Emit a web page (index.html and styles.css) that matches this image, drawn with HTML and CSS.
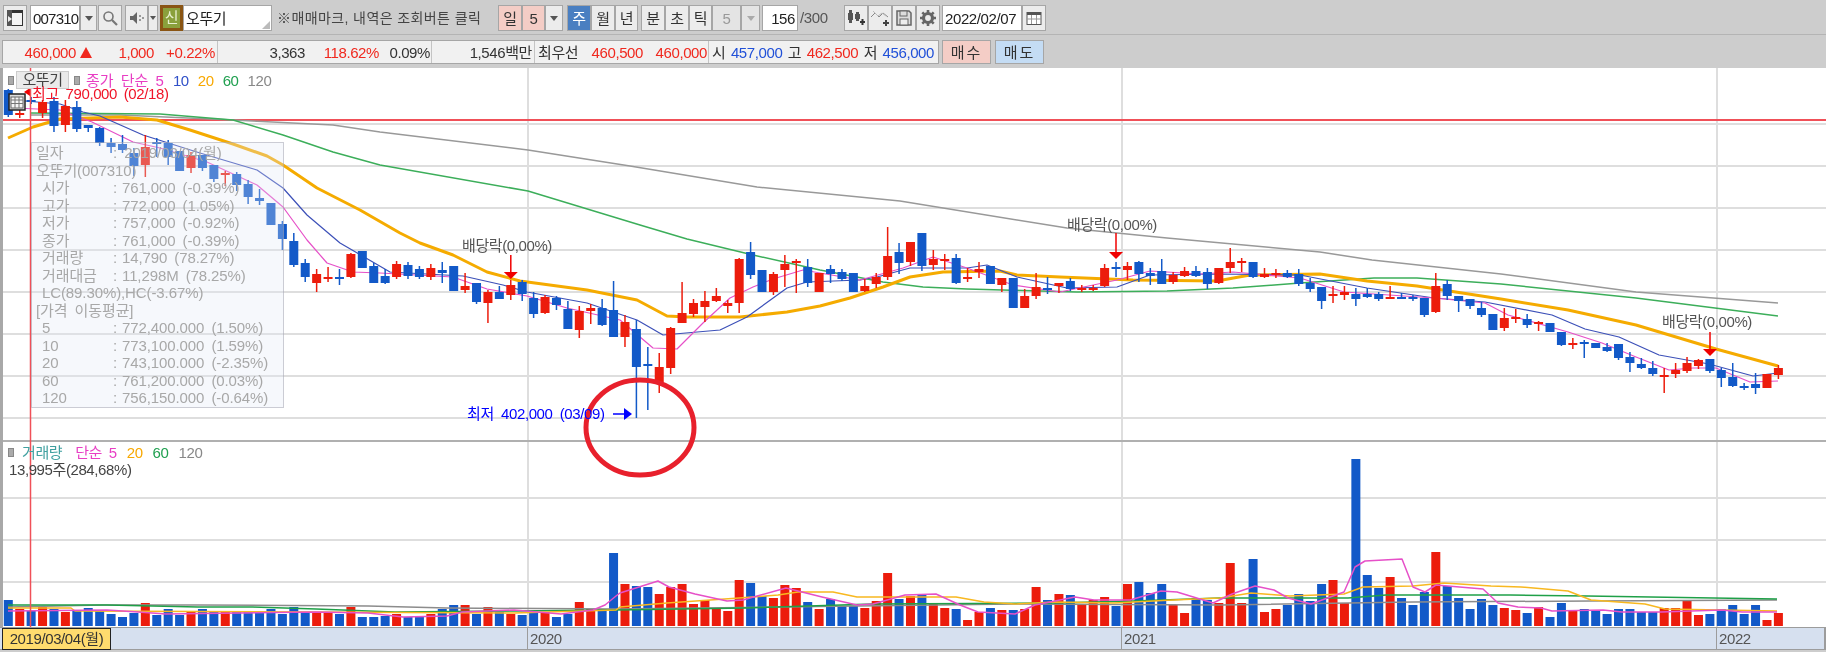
FILE: index.html
```html
<!DOCTYPE html>
<html lang="ko">
<head>
  <meta charset="UTF-8" />
  <title>오뚜기 차트</title>
  <link rel="stylesheet" href="styles.css">
</head>
<body>
  <div class="page">
    <div class="toolbar">
      <button class="tb w24 ml3">
        <svg width="18" height="18" viewBox="0 0 18 18"><rect x="1.5" y="1.5" width="15" height="15" fill="#f4f4f4" stroke="#333"/><rect x="1" y="1" width="16" height="3" fill="#333"/><rect x="1" y="1" width="5" height="16" fill="#555"/><path d="M2 7l4 3-4 3z" fill="#eee"/></svg>
      </button>
      <div class="field w50 ml3 code">007310</div>
      <button class="tb w17 arrow"></button>
      <button class="tb w24 ml1">
        <svg width="16" height="16" viewBox="0 0 16 16"><circle cx="6.5" cy="6.5" r="4.5" fill="none" stroke="#777" stroke-width="1.6"/><path d="M10 10l5 5" stroke="#777" stroke-width="2.2"/></svg>
      </button>
      <button class="tb w23 ml3">
        <svg width="16" height="16" viewBox="0 0 16 16"><path d="M1 6h3l4-4v12l-4-4H1z" fill="#666"/><path d="M10 5h2v2h-2zM10 9h2v2h-2zM13 7h2v2h-2z" fill="#999"/></svg>
      </button>
      <button class="tb w10 arrow"></button>
      <div class="new-badge ml2">신</div>
      <div class="field name">오뚜기</div>
      <div class="hint">※매매마크, 내역은 조회버튼 클릭</div>

      <button class="tb w24 pink group-a">일</button>
      <button class="tb w23 pink">5</button>
      <button class="tb w18 arrow"></button>
      <button class="tb w24 on ml4">주</button>
      <button class="tb w24">월</button>
      <button class="tb w23">년</button>
      <button class="tb w24 ml3">분</button>
      <button class="tb w24">초</button>
      <button class="tb w23">틱</button>
      <button class="tb w29 off">5</button>
      <button class="tb w19 arrow off-arrow"></button>
      <div class="field w36 count ml2">156</div>
      <div class="total">/300</div>

      <button class="tb w24 group-b">
        <svg width="20" height="18" viewBox="0 0 20 18"><path d="M3 1h3v3h1v7H6v3H3v-3H2V4h1zM10 3h3v2h1v5h-1v2h-3v-2H9V5h1z" fill="#555"/><path d="M14 12h5v2h-5zM15.500 10h2v6h-2z" fill="#333"/></svg>
      </button>
      <button class="tb w24">
        <svg width="20" height="18" viewBox="0 0 20 18"><path d="M1 8l4-4 4 4 4-4 5 4" fill="none" stroke="#888"/><path d="M3 2l5 5 4-3 4 3" fill="none" stroke="#bbb"/><path d="M13 13h6v2h-6zM15 11h2v6h-2z" fill="#444"/></svg>
      </button>
      <button class="tb w24">
        <svg width="18" height="18" viewBox="0 0 18 18"><path d="M2 2h12l2 2v12H2z" fill="#ddd" stroke="#666" stroke-width="1.500"/><rect x="5" y="2" width="7" height="5" fill="#ddd" stroke="#666"/><rect x="5" y="10" width="8" height="6" fill="#eee" stroke="#666"/></svg>
      </button>
      <button class="tb w24">
        <svg width="18" height="18" viewBox="0 0 18 18"><circle cx="9" cy="9" r="4.500" fill="none" stroke="#666" stroke-width="3.200"/><path d="M9 1v4M9 13v4M1 9h4M13 9h4M3.300 3.300l3 3M11.700 11.700l3 3M14.700 3.300l-3 3M6.300 11.700l-3 3" stroke="#666" stroke-width="2.600"/></svg>
      </button>
      <div class="field w80 ml2">2022/02/07</div>
      <button class="tb w24">
        <svg width="16" height="15" viewBox="0 0 16 15"><rect x="1" y="1.500" width="14" height="12" fill="#fff" stroke="#555"/><rect x="1" y="1" width="14" height="3" fill="#555"/><path d="M1 8h14M5.500 4v9M10.500 4v9" stroke="#999"/></svg>
      </button>
    </div>

    <div class="quote">
      <div class="quote-box">
        <div class="cell cell-price">
          <span class="up">460,000</span><span class="tri"></span><span class="up">1,000</span><span class="up">+0.22%</span>
        </div>
        <div class="cell cell-vol">
          <span>3,363</span><span class="up">118.62%</span><span>0.09%</span>
        </div>
        <div class="cell cell-amount"><span>1,546백만</span></div>
        <div class="cell cell-best">
          <span class="left">최우선</span><span class="up">460,500</span><span class="up">460,000</span>
        </div>
        <div class="cell cell-ohl">
          <span>시</span><span class="down">457,000</span><span>고</span><span class="up">462,500</span><span>저</span><span class="down">456,000</span>
        </div>
      </div>
      <button class="order buy">매수</button>
      <button class="order sell">매도</button>
    </div>

    <div class="chart">
      <div id="plot"></div>

      <div class="legend legend-price">
        <i class="mark"></i>
        <span class="stock-name">오뚜기</span>
        <i class="mark"></i>
        <span class="c-pink first">종가 단순 5</span>
        <span class="c-blue">10</span>
        <span class="c-orange">20</span>
        <span class="c-green">60</span>
        <span class="c-gray">120</span>
      </div>
      <div class="high-label">최고 790,000 (02/18)</div>
      <div class="calc-icon">
        <svg width="18" height="18" viewBox="0 0 18 18"><rect x="1" y="1" width="16" height="16" fill="#ddd" stroke="#222" stroke-width="1.500"/><rect x="3" y="4" width="12" height="11" fill="#f6f6f6" stroke="#666"/><path d="M3 7h12M3 10.500h12M7 4v11M11 4v11" stroke="#777"/></svg>
      </div>

      <div class="info">
        <div class="info-head">일자</div>
        <div class="info-head">오뚜기(007310)</div>
        <div class="info-row"><span>시가</span><span>:</span><span>761,000 (-0.39%)</span></div>
        <div class="info-row"><span>고가</span><span>:</span><span>772,000 (1.05%)</span></div>
        <div class="info-row"><span>저가</span><span>:</span><span>757,000 (-0.92%)</span></div>
        <div class="info-row"><span>종가</span><span>:</span><span>761,000 (-0.39%)</span></div>
        <div class="info-row"><span>거래량</span><span>:</span><span>14,790 (78.27%)</span></div>
        <div class="info-row"><span>거래대금</span><span>:</span><span>11,298M (78.25%)</span></div>
        <div class="info-head indent">LC(89.30%),HC(-3.67%)</div>
        <div class="info-head">[가격 이동평균]</div>
        <div class="info-row"><span>5</span><span>:</span><span>772,400.000 (1.50%)</span></div>
        <div class="info-row"><span>10</span><span>:</span><span>773,100.000 (1.59%)</span></div>
        <div class="info-row"><span>20</span><span>:</span><span>743,100.000 (-2.35%)</span></div>
        <div class="info-row"><span>60</span><span>:</span><span>761,200.000 (0.03%)</span></div>
        <div class="info-row"><span>120</span><span>:</span><span>756,150.000 (-0.64%)</span></div>
        <div class="info-date">: 2019/03/04(월)</div>
      </div>

      <div class="low-label">최저 402,000 (03/09)</div>

      <div class="legend legend-volume">
        <i class="mark"></i>
        <span class="c-teal">거래량</span>
        <span class="c-pink ml3">단순 5</span>
        <span class="c-orange">20</span>
        <span class="c-green">60</span>
        <span class="c-gray">120</span>
      </div>
      <div class="volume-label">13,995주(284,68%)</div>
    </div>

    <div class="axis">
      <div class="axis-date">2019/03/04(월)</div>
      <div class="axis-year y2020">2020</div>
      <div class="axis-year y2021">2021</div>
      <div class="axis-year y2022">2022</div>
    </div>
  </div>
  <script src="chart.js"></script>
</body>
</html>
```

FILE: styles.css
```css
* {
  box-sizing: border-box;
}
html, body {
  margin: 0;
  padding: 0;
  width: 1826px;
  height: 652px;
  overflow: hidden;
  background-color: #cdcdcd;
}
.page {
  font-family: "Liberation Sans", "Noto Sans CJK KR", sans-serif;
  font-size: 15px;
  letter-spacing: -0.4px;
  line-height: 1;
  color: #333;
  filter: blur(0.35px);
}
button {
  font: inherit;
  letter-spacing: inherit;
  color: inherit;
  padding: 0;
}

/* top toolbar */
.toolbar {
  display: flex;
  height: 35px;
  padding-top: 5px;
  padding-bottom: 4px;
  border-bottom: 1px solid #b4b4b4;
}
.tb {
  display: flex;
  align-items: center;
  justify-content: center;
  height: 26px;
  background-color: #ececec;
  border: 1px solid #a6a6a6;
}
.arrow::after {
  content: "";
  border-left: 4px solid transparent;
  border-right: 4px solid transparent;
  border-top: 5px solid #555;
}
.w10 { width: 10px; }
.w10.arrow::after { border-left-width: 3px; border-right-width: 3px; border-top-width: 4px; }
.w17 { width: 17px; }
.w18 { width: 18px; }
.w19 { width: 19px; }
.w23 { width: 23px; }
.w24 { width: 24px; }
.w29 { width: 29px; }
.w36 { width: 36px; }
.w50 { width: 50px; }
.w80 { width: 80px; }
.ml1 { margin-left: 1px; }
.ml2 { margin-left: 2px; }
.ml3 { margin-left: 3px; }
.ml4 { margin-left: 4px; }
.field {
  display: flex;
  align-items: center;
  height: 26px;
  padding-left: 2px;
  background-color: #fff;
  border: 1px solid #a6a6a6;
  color: #222;
  white-space: nowrap;
  overflow: hidden;
}
.code { letter-spacing: -0.8px; }
.count {
  justify-content: flex-end;
  padding-right: 2px;
}
.new-badge {
  width: 23px;
  height: 26px;
  line-height: 19px;
  text-align: center;
  color: #e8f0d0;
  background-color: #8aa03c;
  border: 3px solid #8a5514;
}
.name {
  position: relative;
  width: 89px;
}
.name::after {
  content: "";
  position: absolute;
  right: 1px;
  bottom: 1px;
  border-left: 8px solid transparent;
  border-bottom: 8px solid #bbb;
}
.hint {
  width: 212px;
  margin-left: 5px;
  font-size: 14px;
  letter-spacing: 0.4px;
  line-height: 26px;
  white-space: nowrap;
  color: #444;
}
.group-a { margin-left: 9px; }
.group-b { margin-left: 14px; }
.pink { background-color: #f4cdc6; }
.on {
  background-color: #4a7fc1;
  color: #fff;
}
.off {
  color: #999;
  background-color: #e4e4e4;
}
.off-arrow { background-color: #e4e4e4; }
.off-arrow::after { border-top-color: #aaa; }
.total {
  width: 30px;
  margin-left: 2px;
  line-height: 26px;
  color: #555;
}

/* quote strip */
.quote {
  display: flex;
  height: 24px;
  margin-top: 5px;
  padding-left: 2px;
}
.quote-box {
  display: flex;
  width: 937px;
  background-color: #f1f1f1;
  border: 1px solid #a6a6a6;
}
.cell {
  display: grid;
  align-items: center;
  text-align: right;
  white-space: nowrap;
  border-right: 1px solid #c4c4c4;
}
.cell-price {
  width: 215px;
  grid-template-columns: 73px 19px 59px 61px;
}
.tri {
  justify-self: center;
  width: 0;
  border-left: 6.5px solid transparent;
  border-right: 6.5px solid transparent;
  border-bottom: 11px solid #f0281e;
}
.cell-vol {
  width: 214px;
  grid-template-columns: 87px 74px 51px;
}
.cell-amount {
  width: 103px;
  grid-template-columns: 100px;
}
.cell-best {
  width: 174px;
  grid-template-columns: 52px 56px 64px;
}
.left {
  text-align: left;
  padding-left: 3px;
}
.cell-ohl {
  width: 229px;
  display: flex;
  gap: 5.5px;
  padding-left: 3px;
  border-right: 0;
}
.up { color: #f0281e; }
.down { color: #2050d8; }
.order {
  width: 49px;
  height: 24px;
  margin-left: 3px;
  border: 1px solid #a6a6a6;
  letter-spacing: 2px;
}
.buy { background-color: #f4cdc6; }
.sell {
  width: 49px;
  margin-left: 4px;
  background-color: #c4dcf4;
}

/* chart area */
.chart {
  position: relative;
  height: 559px;
  margin-top: 4px;
  background-color: #fff;
  overflow: hidden;
}
#plot svg {
  display: block;
}
.grid { stroke: #dedede; stroke-width: 2; }
.axis-line { stroke: #b0b0b0; stroke-width: 2; }
.frame { stroke: #a8a8a8; stroke-width: 3; }
.hairline { stroke: #f05058; stroke-width: 2; }
.crosshair { stroke: #f05058; stroke-width: 1.500; }
.ma { fill: none; stroke-linejoin: round; }
.ma-120 { stroke: #999; stroke-width: 1.500; }
.ma-60 { stroke: #3cae5a; stroke-width: 1.500; }
.ma-20 { stroke: #f5ab00; stroke-width: 3; }
.ma-10 { stroke: #3c50b8; stroke-width: 1.200; }
.ma-5 { stroke: #e650c8; stroke-width: 1.200; }
.vma-20 { stroke: #f8b820; stroke-width: 1.500; }
.vma-60 { stroke: #1fa048; stroke-width: 1.500; }
.vma-120 { stroke: #8c8c8c; stroke-width: 1.500; }
.vma-5 { stroke: #e650c8; stroke-width: 1.500; }
.red { fill: #ec1c0c; }
.blue { fill: #1259c8; }
.wick-red { stroke: #ec1c0c; stroke-width: 1.500; }
.wick-blue { stroke: #1259c8; stroke-width: 1.500; }
.marker { stroke: #f00000; stroke-width: 1.500; }
.marker-head { fill: #f00000; }
.marker-text {
  font-size: 15px;
  word-spacing: 1px;
  fill: #555;
}
.low-arrow { stroke: #0000ff; stroke-width: 1.500; }
.low-head { fill: #0000ff; }
.circle {
  fill: none;
  stroke: #e8202c;
  stroke-width: 5;
}

.legend {
  position: absolute;
  display: flex;
  align-items: center;
  gap: 9px;
  white-space: nowrap;
}
.legend-price {
  top: 3px;
  left: 8px;
  height: 18px;
}
.legend-volume {
  top: 375px;
  left: 8px;
  height: 18px;
  gap: 10px;
  word-spacing: 3px;
}
.legend-volume .mark { margin-right: -2px; }
.mark {
  display: block;
  width: 6px;
  height: 9px;
  background-color: #aaa;
  border: 1px solid #888;
}
.stock-name {
  width: 53px;
  height: 18px;
  margin-left: -7px;
  margin-right: -4px;
  line-height: 16px;
  text-align: center;
  color: #444;
  background-color: #eaeaea;
  border: 1px solid #ccc;
}
.first {
  margin-left: -3px;
  letter-spacing: 0;
  word-spacing: 3px;
}
.c-pink { color: #e83ec4; }
.c-blue { color: #3050c8; }
.c-orange { color: #f8a800; }
.c-green { color: #20a050; }
.c-gray { color: #888; }
.c-teal { color: #40a0a0; }
.high-label {
  position: absolute;
  top: 18px;
  left: 32px;
  color: #f01428;
  word-spacing: 3px;
  white-space: nowrap;
}
.calc-icon {
  position: absolute;
  top: 25px;
  left: 8px;
  width: 18px;
  height: 18px;
}
.info {
  position: absolute;
  top: 74px;
  left: 31px;
  width: 253px;
  height: 266px;
  padding: 1px 0 0 4px;
  letter-spacing: -0.1px;
  word-spacing: 3px;
  color: #a8a8a8;
  background-color: rgba(226, 232, 246, 0.3);
  border: 1px solid rgba(150, 150, 165, 0.45);
}
.info-head,
.info-row {
  height: 17.5px;
  line-height: 17.5px;
  white-space: nowrap;
}
.info-row {
  display: grid;
  grid-template-columns: 71px 9px 1fr;
  padding-left: 6px;
}
.indent { padding-left: 6px; }
.info-date {
  position: absolute;
  top: 1px;
  left: 81px;
  line-height: 17.5px;
  white-space: nowrap;
}
.low-label {
  position: absolute;
  top: 338px;
  left: 467px;
  color: #0000ff;
  word-spacing: 3.500px;
  white-space: nowrap;
}
.volume-label {
  position: absolute;
  top: 394px;
  left: 9px;
  color: #444;
  white-space: nowrap;
}

/* date axis */
.axis {
  position: relative;
  height: 23px;
  background-color: #d6e0ef;
  border-top: 1px solid #9c9c9c;
  border-bottom: 1px solid #9c9c9c;
  border-right: 2px solid #9c9c9c;
}
.axis-date {
  position: absolute;
  left: 2px;
  top: 0;
  width: 109px;
  height: 22px;
  line-height: 20px;
  text-align: center;
  background-color: #ffdc6e;
  border: 1px solid #222;
}
.axis-year {
  position: absolute;
  top: 0;
  height: 22px;
  padding-left: 2px;
  line-height: 22px;
  color: #555;
  border-left: 1px solid #9c9c9c;
}
.y2020 { left: 527px; }
.y2021 { left: 1121px; }
.y2022 { left: 1716px; }
```

FILE: chart.js
```js
const W = 1826, TOP = 68, BOTTOM = 627;
const xOf = (i) => 8.3 + 11.42 * i;

// top of body, bottom of body, high, low (all screen y), r = red, b = blue
const candles = [
  [90,115,89,117,"b"],[113,115,105,118,"r"],[100,102,97,104,"b"],[102,113,100,118,"r"],[101,126,97,132,"b"],
  [106,125,100,132,"r"],[107,129,101,132,"b"],[125,128,125,132,"b"],[128,143,127,146,"b"],[143,147,138,153,"b"],
  [144,150,135,153,"b"],[153,166,148,176,"b"],[147,165,135,177,"r"],[142,144,138,157,"b"],[143,157,140,165,"b"],
  [151,171,151,171,"b"],[155,168,152,173,"r"],[155,168,155,171,"b"],[165,179,165,182,"b"],[173,174,171,186,"r"],
  [174,185,172,191,"b"],[184,197,180,204,"b"],[198,201,189,205,"b"],[203,225,203,225,"b"],[224,239,221,250,"b"],
  [241,265,233,267,"b"],[263,277,259,282,"b"],[274,283,269,292,"r"],[277,279,267,282,"r"],[277,279,269,285,"b"],
  [254,277,253,278,"r"],[251,268,251,268,"b"],[266,283,263,283,"b"],[276,283,269,284,"b"],[264,277,261,279,"r"],
  [265,276,262,279,"b"],[269,277,266,279,"b"],[268,277,264,280,"r"],[270,273,262,283,"b"],[266,291,266,291,"b"],
  [286,290,273,293,"r"],[283,302,283,304,"b"],[292,303,290,323,"r"],[292,299,286,299,"b"],[285,295,280,300,"r"],
  [282,294,280,301,"b"],[298,314,292,318,"b"],[297,313,295,314,"r"],[298,305,296,310,"b"],[309,329,301,329,"b"],
  [311,330,306,338,"r"],[308,311,304,324,"r"],[308,325,299,326,"b"],[310,337,281,337,"b"],[322,337,315,347,"r"],
  [329,367,320,418,"b"],[364,366,347,410,"b"],[367,382,353,393,"r"],[328,368,327,374,"r"],[313,323,282,323,"r"],
  [303,314,299,317,"r"],[301,307,291,322,"r"],[296,301,288,302,"r"],[303,306,300,313,"r"],[259,303,258,313,"r"],
  [252,275,242,279,"b"],[270,292,270,292,"b"],[274,292,272,295,"r"],[264,270,255,287,"r"],[261,263,259,293,"r"],
  [267,283,259,287,"b"],[273,292,273,292,"r"],[269,274,265,283,"b"],[272,279,269,281,"b"],[273,292,273,292,"b"],
  [286,291,279,292,"r"],[277,284,273,288,"r"],[256,277,227,280,"r"],[252,263,243,274,"b"],[242,262,242,266,"r"],
  [233,266,233,271,"b"],[259,265,250,270,"r"],[259,261,254,270,"r"],[258,283,254,284,"b"],[277,279,268,282,"r"],
  [269,272,262,278,"r"],[266,284,266,284,"b"],[278,285,278,292,"r"],[278,308,278,308,"b"],[296,308,289,308,"r"],
  [287,296,273,299,"r"],[288,289,277,294,"b"],[283,286,283,293,"r"],[281,289,278,291,"b"],[288,289,285,292,"r"],
  [288,289,285,291,"r"],[268,286,264,287,"r"],[267,269,262,277,"b"],[266,270,262,280,"r"],[262,274,261,282,"b"],
  [273,276,268,285,"b"],[271,284,259,284,"b"],[275,282,272,284,"r"],[271,276,267,277,"r"],[271,276,266,277,"b"],
  [272,284,268,289,"b"],[268,283,268,284,"r"],[262,268,248,273,"r"],[261,262,258,272,"r"],[262,277,262,278,"b"],
  [274,277,268,278,"r"],[273,275,269,278,"r"],[273,277,270,278,"b"],[274,284,269,286,"b"],[283,289,278,292,"b"],
  [287,301,287,309,"b"],[294,296,286,303,"r"],[292,295,286,300,"r"],[294,299,288,306,"b"],[294,297,288,298,"b"],
  [294,299,292,301,"b"],[297,299,286,299,"r"],[297,299,293,299,"b"],[297,299,295,301,"b"],[298,315,298,317,"b"],
  [286,312,273,313,"r"],[284,296,280,300,"b"],[296,301,296,312,"b"],[299,306,299,309,"b"],[308,315,302,317,"b"],
  [314,330,314,330,"b"],[318,328,308,331,"r"],[317,318,309,323,"r"],[319,325,314,328,"b"],[322,323,321,331,"r"],
  [323,332,323,332,"b"],[332,345,332,346,"b"],[343,345,338,349,"r"],[342,343,340,358,"b"],[343,348,343,348,"b"],
  [347,351,343,352,"b"],[344,358,344,360,"b"],[357,363,352,372,"b"],[364,368,358,369,"b"],[368,374,361,376,"b"],
  [375,376,368,393,"r"],[370,374,363,378,"r"],[363,371,357,373,"r"],[360,366,359,369,"r"],[359,371,359,373,"b"],
  [370,378,368,387,"b"],[377,386,363,387,"b"],[386,388,383,390,"b"],[384,388,373,394,"b"],[374,388,374,388,"r"],
  [368,375,365,379,"r"]
];

// volume bars: top y, colour
const volume = [
  [600,"b"],[609,"r"],[611,"b"],[607,"r"],[609,"b"],[612,"r"],[610,"b"],[608,"b"],[611,"b"],[614,"b"],
  [617,"b"],[613,"b"],[603,"r"],[615,"b"],[609,"b"],[615,"b"],[612,"r"],[609,"b"],[612,"b"],[612,"r"],
  [612,"b"],[612,"b"],[612,"b"],[609,"b"],[614,"b"],[607,"b"],[612,"b"],[612,"r"],[612,"r"],[614,"b"],
  [607,"r"],[617,"b"],[617,"b"],[616,"b"],[614,"r"],[617,"b"],[617,"b"],[614,"r"],[609,"b"],[605,"b"],
  [605,"r"],[614,"b"],[607,"r"],[612,"b"],[614,"r"],[615,"b"],[612,"b"],[612,"r"],[617,"b"],[614,"b"],
  [602,"r"],[609,"r"],[609,"b"],[553,"b"],[584,"r"],[586,"b"],[587,"b"],[594,"r"],[587,"r"],[584,"r"],
  [604,"r"],[600,"r"],[608,"r"],[611,"r"],[580,"r"],[583,"b"],[596,"b"],[598,"r"],[585,"r"],[588,"r"],
  [602,"b"],[609,"r"],[599,"b"],[606,"b"],[606,"b"],[608,"r"],[601,"r"],[573,"r"],[599,"b"],[596,"r"],
  [595,"b"],[604,"r"],[608,"r"],[609,"b"],[620,"r"],[612,"r"],[608,"b"],[610,"r"],[610,"b"],[609,"r"],
  [587,"r"],[600,"b"],[594,"r"],[595,"b"],[604,"r"],[600,"r"],[597,"r"],[606,"b"],[584,"r"],[582,"b"],
  [593,"b"],[584,"b"],[605,"r"],[613,"r"],[598,"b"],[600,"b"],[603,"r"],[563,"r"],[603,"r"],[559,"b"],
  [612,"r"],[609,"r"],[605,"b"],[594,"b"],[601,"b"],[584,"b"],[580,"r"],[603,"r"],[459,"b"],[575,"b"],
  [588,"b"],[577,"r"],[598,"b"],[605,"b"],[592,"b"],[552,"r"],[586,"b"],[598,"b"],[609,"b"],[599,"b"],
  [605,"b"],[608,"r"],[610,"r"],[613,"b"],[607,"r"],[617,"b"],[603,"b"],[611,"r"],[609,"b"],[611,"b"],
  [614,"b"],[609,"b"],[609,"b"],[612,"b"],[612,"b"],[608,"r"],[608,"r"],[600,"r"],[615,"r"],[614,"b"],
  [609,"b"],[605,"b"],[614,"b"],[605,"b"],[620,"r"],[613,"r"]
];

const lines = {
  "ma-120": [[30,115],[120,115],[233,120],[333,125],[380,132],[528,150],[630,166],[757,187],[900,201],[1067,228],[1167,238],[1320,252],[1372,260],[1501,274],[1636,292],[1778,303]],
  "ma-60": [[30,113],[160,114],[233,120],[283,135],[333,152],[380,165],[528,191],[640,225],[687,239],[753,255],[820,270],[883,282],[923,287],[967,289],[1077,292],[1167,291],[1233,288],[1300,283],[1374,278],[1417,278],[1501,284],[1636,298],[1778,316]],
  "ma-20": [[8,138],[33,127],[60,119],[120,117],[157,120],[190,130],[233,144],[267,156],[283,165],[317,188],[360,210],[400,233],[420,243],[453,255],[487,272],[520,281],[587,290],[637,300],[667,316],[687,317],[740,317],[787,312],[820,306],[850,298],[883,287],[910,277],[943,272],[1000,271],[1017,275],[1060,277],[1133,280],[1217,281],[1250,275],[1320,274],[1367,281],[1417,286],[1501,299],[1568,310],[1636,325],[1716,349],[1778,366]],
  "ma-10": [[14,100],[60,104],[83,112],[100,116],[143,135],[200,153],[257,170],[283,188],[307,215],[340,243],[390,272],[463,276],[503,285],[527,292],[587,303],[637,320],[663,335],[720,330],[747,317],[787,288],[807,282],[860,280],[877,277],[910,268],[967,268],[987,265],[1017,277],[1067,288],[1117,287],[1150,275],[1217,274],[1300,275],[1367,288],[1434,298],[1485,302],[1552,315],[1585,329],[1619,337],[1659,355],[1709,364],[1753,376],[1778,373]],
  "ma-5": [[14,108],[60,110],[92,122],[133,142],[160,148],[207,162],[257,185],[283,207],[307,240],[327,263],[353,272],[380,273],[453,277],[487,289],[527,296],[567,308],[620,320],[653,348],[677,349],[703,323],[730,298],[753,287],[773,279],[803,270],[860,280],[903,268],[933,257],[967,268],[1013,285],[1060,292],[1117,280],[1150,271],[1200,274],[1233,272],[1300,278],[1344,292],[1434,298],[1485,303],[1508,315],[1568,332],[1602,343],[1636,357],[1669,370],[1693,368],[1716,368],[1750,382],[1778,381]]
};

const volLines = {
  "vma-120": [[8,607],[103,605],[198,605],[368,606],[447,608],[616,609],[778,607],[1015,604],[1220,605],[1413,602],[1591,601],[1777,600]],
  "vma-60": [[8,605],[107,605],[198,607],[253,607],[316,609],[395,612],[514,611],[616,610],[745,608],[873,604],[1055,603],[1134,601],[1220,598],[1348,598],[1386,595],[1510,595],[1587,596],[1777,599]],
  "vma-20": [[8,608],[71,608],[75,611],[514,613],[616,610],[620,607],[667,603],[739,598],[778,595],[798,592],[833,592],[857,597],[956,597],[984,602],[1015,604],[1055,602],[1114,603],[1173,600],[1220,598],[1251,593],[1290,596],[1344,594],[1363,587],[1413,586],[1444,583],[1491,586],[1521,587],[1568,591],[1591,600],[1645,604],[1665,609],[1777,611]],
  "vma-5": [[8,611],[107,610],[138,612],[166,614],[316,612],[368,613],[403,617],[447,616],[462,612],[514,610],[561,614],[593,610],[605,605],[616,596],[620,593],[658,581],[669,587],[695,594],[727,601],[743,600],[786,588],[822,597],[857,605],[873,604],[905,595],[936,594],[960,605],[978,612],[1015,614],[1035,605],[1075,597],[1094,600],[1130,600],[1161,591],[1177,592],[1213,603],[1232,594],[1255,586],[1274,590],[1288,598],[1311,604],[1344,592],[1355,567],[1365,561],[1402,559],[1413,587],[1425,592],[1436,585],[1483,589],[1498,603],[1518,607],[1541,608],[1552,611],[1603,610],[1622,612],[1661,612],[1722,610],[1742,612],[1777,612]]
};

const markers = [
  { x: 510.8, textX: 462, textY: 251, top: 255, tip: 279 },
  { x: 1116, textX: 1067, textY: 230, top: 233, tip: 259 },
  { x: 1710, textX: 1662, textY: 327, top: 332, tip: 356 }
];

function hLine(y, cls) {
  return `<line class="${cls}" x1="0" x2="${W}" y1="${y}" y2="${y}"/>`;
}
function vLine(x, y1, y2, cls) {
  return `<line class="${cls}" x1="${x}" x2="${x}" y1="${y1}" y2="${y2}"/>`;
}
function polyline(points, cls) {
  return `<polyline class="ma ${cls}" points="${points.map((p) => p.join(",")).join(" ")}"/>`;
}

let svg = "";
[124, 166, 208, 250, 292, 334, 376, 418, 498, 540, 582].forEach((y) => { svg += hLine(y, "grid"); });
[528, 1122, 1717].forEach((x) => { svg += vLine(x, TOP, BOTTOM, "grid"); });

svg += hLine(120, "hairline");
Object.keys(lines).forEach((k) => { svg += polyline(lines[k], k); });

candles.forEach((c, i) => {
  const x = xOf(i);
  const color = c[4] === "r" ? "red" : "blue";
  svg += vLine(x, c[2], c[3], "wick-" + color);
  svg += `<rect class="${color}" x="${x - 4.5}" y="${c[0]}" width="9" height="${Math.max(c[1] - c[0], 2)}"/>`;
});

volume.forEach((v, i) => {
  const color = v[1] === "r" ? "red" : "blue";
  svg += `<rect class="${color}" x="${xOf(i) - 4.5}" y="${v[0]}" width="9" height="${626 - v[0]}"/>`;
});
Object.keys(volLines).forEach((k) => { svg += polyline(volLines[k], k); });

markers.forEach((m) => {
  svg += `<text class="marker-text" x="${m.textX}" y="${m.textY}">배당락(0,00%)</text>`;
  svg += vLine(m.x, m.top, m.tip - 6, "marker");
  svg += `<path class="marker-head" d="M${m.x - 7} ${m.tip - 7}h14l-7 7z"/>`;
});

// arrow on the high and on the low
svg += `<path class="marker-head" d="M24 92l6-4v8z"/>`;
svg += `<line class="low-arrow" x1="613" x2="626" y1="414" y2="414"/>`;
svg += `<path class="low-head" d="M632 414l-8-6v12z"/>`;

svg += hLine(441, "axis-line");
svg += vLine(1.5, TOP, BOTTOM, "frame");
svg += vLine(30.5, TOP, BOTTOM, "crosshair");
svg += `<ellipse class="circle" cx="640" cy="427.500" rx="54" ry="47.500"/>`;

document.getElementById("plot").innerHTML =
  `<svg width="${W}" height="${BOTTOM - TOP}" viewBox="0 ${TOP} ${W} ${BOTTOM - TOP}">${svg}</svg>`;
```
